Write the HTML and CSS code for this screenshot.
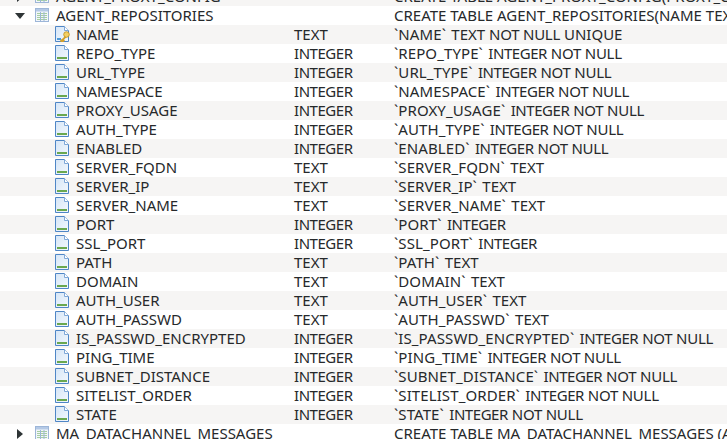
FILE: index.html
```html
<!DOCTYPE html>
<html>
<head>
<meta charset="utf-8">
<title>Database structure</title>
<link rel="stylesheet" href="styles.css">
</head>
<body>
<svg width="0" height="0" class="defs">
  <defs>
    <linearGradient id="paper" x1="0" y1="0" x2="1" y2="1">
      <stop offset="0" stop-color="#d6e6f7"/>
      <stop offset="1" stop-color="#f3f8fd"/>
    </linearGradient>
    <symbol id="table" viewBox="0 0 16 16">
      <rect x="1.500" y="1.500" width="13" height="13" fill="#f2f6fb" stroke="#9db6d8"/>
      <rect x="2" y="2" width="12" height="2.500" fill="#b4c9e6"/>
      <path d="M3 6.500h10M3 8.500h10M3 10.500h10M3 12.500h10" stroke="#a6cfa0" fill="none"/>
      <path d="M6.500 5v9M10 5v9" stroke="#9db6d8" fill="none"/>
    </symbol>
    <symbol id="field" viewBox="0 0 16 16">
      <path d="M1.500 .5h9l4 4v11h-13z" fill="url(#paper)" stroke="#4f86c6"/>
      <path d="M10.500 .5v4h4" fill="#fff" stroke="#7fa8d8"/>
      <rect x="3" y="12" width="10" height="2" fill="#6aa84f"/>
    </symbol>
    <symbol id="key" viewBox="0 0 16 16">
      <path d="M1.500 .5h9l4 4v11h-13z" fill="url(#paper)" stroke="#4f86c6"/>
      <path d="M10.500 .5v4h4" fill="#fff" stroke="#7fa8d8"/>
      <rect x="3" y="12" width="4" height="2" fill="#4f9ad8"/>
      <path d="M6.500 15.500l1.200-1.200 1 1 1-1-.7-1 3-3" stroke="#d3a02a" stroke-width="1.900" fill="none"/>
      <circle cx="12.500" cy="8.500" r="2.800" fill="#f4cf62" stroke="#bb8c1a" stroke-width=".8"/>
    </symbol>
  </defs>
</svg>
<div class="tree">
  <div class="row table"><span class="arrow right"></span><svg class="icon"><use href="#table"/></svg><span class="name">AGENT_PROXY_CONFIG</span><span class="sql">CREATE TABLE AGENT_PROXY_CONFIG(PROXY_C</span></div>
  <div class="row table"><span class="arrow down"></span><svg class="icon"><use href="#table"/></svg><span class="name">AGENT_REPOSITORIES</span><span class="sql">CREATE TABLE AGENT_REPOSITORIES(NAME TEX</span></div>
  <div class="row field"><svg class="icon"><use href="#key"/></svg><span class="name">NAME</span><span class="type">TEXT</span><span class="sql"><span class="id">`NAME`</span> TEXT <span class="nn">NOT NULL</span> UNIQUE</span></div>
  <div class="row field"><svg class="icon"><use href="#field"/></svg><span class="name">REPO_TYPE</span><span class="type int">INTEGER</span><span class="sql"><span class="id">`REPO_TYPE`</span> <span class="int">INTEGER</span> <span class="nn">NOT NULL</span></span></div>
  <div class="row field"><svg class="icon"><use href="#field"/></svg><span class="name">URL_TYPE</span><span class="type int">INTEGER</span><span class="sql"><span class="id">`URL_TYPE`</span> <span class="int">INTEGER</span> <span class="nn">NOT NULL</span></span></div>
  <div class="row field"><svg class="icon"><use href="#field"/></svg><span class="name">NAMESPACE</span><span class="type int">INTEGER</span><span class="sql"><span class="id">`NAMESPACE`</span> <span class="int">INTEGER</span> <span class="nn">NOT NULL</span></span></div>
  <div class="row field"><svg class="icon"><use href="#field"/></svg><span class="name">PROXY_USAGE</span><span class="type int">INTEGER</span><span class="sql"><span class="id">`PROXY_USAGE`</span> <span class="int">INTEGER</span> <span class="nn">NOT NULL</span></span></div>
  <div class="row field"><svg class="icon"><use href="#field"/></svg><span class="name">AUTH_TYPE</span><span class="type int">INTEGER</span><span class="sql"><span class="id">`AUTH_TYPE`</span> <span class="int">INTEGER</span> <span class="nn">NOT NULL</span></span></div>
  <div class="row field"><svg class="icon"><use href="#field"/></svg><span class="name">ENABLED</span><span class="type int">INTEGER</span><span class="sql"><span class="id">`ENABLED`</span> <span class="int">INTEGER</span> <span class="nn">NOT NULL</span></span></div>
  <div class="row field"><svg class="icon"><use href="#field"/></svg><span class="name">SERVER_FQDN</span><span class="type">TEXT</span><span class="sql"><span class="id">`SERVER_FQDN`</span> TEXT</span></div>
  <div class="row field"><svg class="icon"><use href="#field"/></svg><span class="name">SERVER_IP</span><span class="type">TEXT</span><span class="sql"><span class="id">`SERVER_IP`</span> TEXT</span></div>
  <div class="row field"><svg class="icon"><use href="#field"/></svg><span class="name">SERVER_NAME</span><span class="type">TEXT</span><span class="sql"><span class="id">`SERVER_NAME`</span> TEXT</span></div>
  <div class="row field"><svg class="icon"><use href="#field"/></svg><span class="name">PORT</span><span class="type int">INTEGER</span><span class="sql"><span class="id">`PORT`</span> <span class="int">INTEGER</span></span></div>
  <div class="row field"><svg class="icon"><use href="#field"/></svg><span class="name">SSL_PORT</span><span class="type int">INTEGER</span><span class="sql"><span class="id">`SSL_PORT`</span> <span class="int">INTEGER</span></span></div>
  <div class="row field"><svg class="icon"><use href="#field"/></svg><span class="name">PATH</span><span class="type">TEXT</span><span class="sql"><span class="id">`PATH`</span> TEXT</span></div>
  <div class="row field"><svg class="icon"><use href="#field"/></svg><span class="name">DOMAIN</span><span class="type">TEXT</span><span class="sql"><span class="id">`DOMAIN`</span> TEXT</span></div>
  <div class="row field"><svg class="icon"><use href="#field"/></svg><span class="name">AUTH_USER</span><span class="type">TEXT</span><span class="sql"><span class="id">`AUTH_USER`</span> TEXT</span></div>
  <div class="row field"><svg class="icon"><use href="#field"/></svg><span class="name">AUTH_PASSWD</span><span class="type">TEXT</span><span class="sql"><span class="id">`AUTH_PASSWD`</span> TEXT</span></div>
  <div class="row field"><svg class="icon"><use href="#field"/></svg><span class="name">IS_PASSWD_ENCRYPTED</span><span class="type int">INTEGER</span><span class="sql"><span class="id">`IS_PASSWD_ENCRYPTED`</span> <span class="int">INTEGER</span> <span class="nn">NOT NULL</span></span></div>
  <div class="row field"><svg class="icon"><use href="#field"/></svg><span class="name">PING_TIME</span><span class="type int">INTEGER</span><span class="sql"><span class="id">`PING_TIME`</span> <span class="int">INTEGER</span> <span class="nn">NOT NULL</span></span></div>
  <div class="row field"><svg class="icon"><use href="#field"/></svg><span class="name">SUBNET_DISTANCE</span><span class="type int">INTEGER</span><span class="sql"><span class="id">`SUBNET_DISTANCE`</span> <span class="int">INTEGER</span> <span class="nn">NOT NULL</span></span></div>
  <div class="row field"><svg class="icon"><use href="#field"/></svg><span class="name">SITELIST_ORDER</span><span class="type int">INTEGER</span><span class="sql"><span class="id">`SITELIST_ORDER`</span> <span class="int">INTEGER</span> <span class="nn">NOT NULL</span></span></div>
  <div class="row field"><svg class="icon"><use href="#field"/></svg><span class="name">STATE</span><span class="type int">INTEGER</span><span class="sql"><span class="id">`STATE`</span> <span class="int">INTEGER</span> <span class="nn">NOT NULL</span></span></div>
  <div class="row table"><span class="arrow right"></span><svg class="icon"><use href="#table"/></svg><span class="name">MA_DATACHANNEL_MESSAGES</span><span class="sql">CREATE TABLE MA_DATACHANNEL_MESSAGES (A</span></div>
</div>
</body>
</html>
```
FILE: styles.css
```css
html, body {
  margin: 0;
  padding: 0;
  width: 727px;
  height: 439px;
  overflow: hidden;
  background: #fff;
}
.defs { display: block; height: 0; }
.tree {
  margin-top: -13px;
  font-family: "Noto Sans", sans-serif;
  font-size: 15px;
  color: #26292b;
}
.row {
  height: 19px;
  display: grid;
  align-items: center;
  white-space: nowrap;
}
.row:nth-child(odd) { background: #f6f5f4; }
.row.table { grid-template-columns: 34px 22px 338px 1fr; }
.row.field { grid-template-columns: 54px 22px 218px 100px 1fr; }
.row.field .icon { grid-column: 2; }
.arrow { width: 0; height: 0; border-style: solid; grid-column: 1; margin-left: 15px; }
.arrow.down { border-width: 6px 5px 0 5px; border-color: #2e3436 transparent transparent; }
.arrow.right { border-width: 5px 0 5px 6px; border-color: transparent transparent transparent #2e3436; margin-left: 17px; }
.icon { width: 16px; height: 16px; margin-bottom: 1px; }
.name, .type, .sql { line-height: 18px; margin-bottom: 1px; }
.id { letter-spacing: 0.1px; margin-right: 1.500px; }
.int { letter-spacing: -0.45px; }
.nn { letter-spacing: -0.25px; }
```
